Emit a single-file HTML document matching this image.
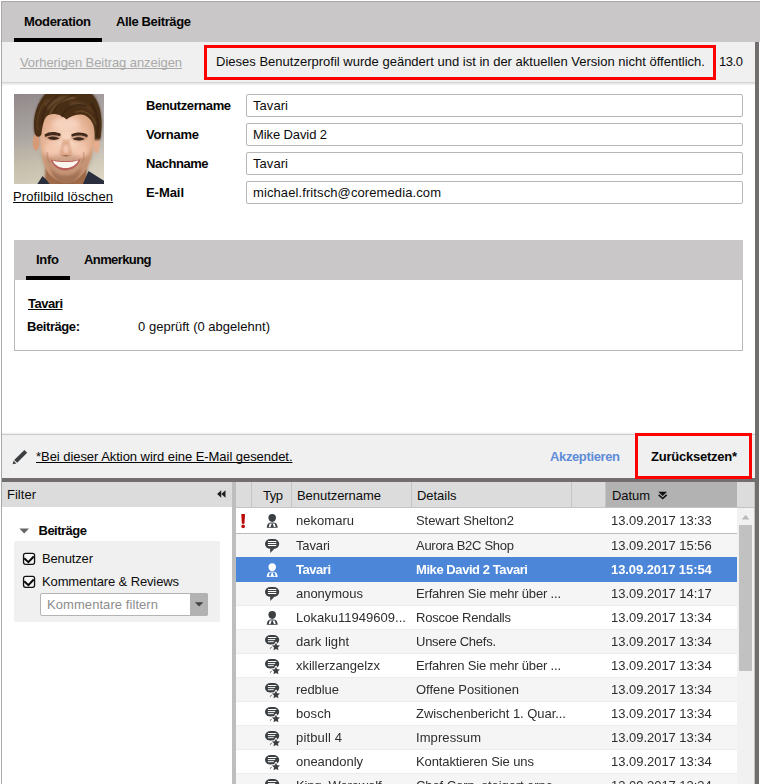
<!DOCTYPE html>
<html lang="de"><head><meta charset="utf-8"><title>Moderation</title>
<style>
html,body{margin:0;padding:0;}
body{width:760px;height:784px;position:relative;overflow:hidden;background:#fff;font-family:"Liberation Sans", sans-serif;}
#r{position:absolute;left:0;top:0;width:760px;height:784px;overflow:hidden;}
#r div,#r span,#r svg{position:absolute;}
#r span{white-space:pre;line-height:16px;height:16px;}
.u{text-decoration:underline;text-underline-offset:1px;text-decoration-thickness:1px;text-decoration-skip-ink:none;}
</style></head><body><div id="r">
<div style="left:1px;top:1px;width:759px;height:783px;background:#a8a8a8;"></div>
<div style="left:2px;top:2px;width:756px;height:782px;background:#fff;"></div>
<div style="left:2px;top:2px;width:758px;height:40px;background:#c9c7c7;"></div>
<div style="left:14px;top:38px;width:88px;height:4px;background:#000;"></div>
<div style="left:2px;top:42px;width:753px;height:40px;background:#f0f0f0;"></div>
<div style="left:2px;top:82px;width:753px;height:1px;background:#d4d4d4;"></div>
<div style="left:2px;top:83px;width:753px;height:1px;background:#e6e6e6;"></div>
<div style="left:2px;top:84px;width:753px;height:1px;background:#f3f3f3;"></div>
<div style="left:2px;top:85px;width:753px;height:1px;background:#fafafa;"></div>
<div style="left:755px;top:42px;width:4px;height:742px;background:#736e6e;"></div>
<div style="left:759px;top:42px;width:1px;height:742px;background:#fff;"></div>
<div style="left:204px;top:45px;width:512px;height:35px;border:3px solid #fd0000;box-sizing:border-box;"></div>
<div style="left:246px;top:94px;width:497px;height:23px;background:#fff;border:1px solid #b6b6b6;border-radius:2px;box-sizing:border-box;"></div>
<div style="left:246px;top:123px;width:497px;height:23px;background:#fff;border:1px solid #b6b6b6;border-radius:2px;box-sizing:border-box;"></div>
<div style="left:246px;top:152px;width:497px;height:23px;background:#fff;border:1px solid #b6b6b6;border-radius:2px;box-sizing:border-box;"></div>
<div style="left:246px;top:181px;width:497px;height:23px;background:#fff;border:1px solid #b6b6b6;border-radius:2px;box-sizing:border-box;"></div>
<div style="left:14px;top:240px;width:729px;height:40px;background:#c9c7c7;"></div>
<div style="left:14px;top:280px;width:729px;height:71px;background:#fff;border:1px solid #b9b9b9;border-top:none;box-sizing:border-box;"></div>
<div style="left:26px;top:276px;width:44px;height:4px;background:#000;"></div>
<div style="left:2px;top:432px;width:753px;height:1px;background:#fafafa;"></div>
<div style="left:2px;top:433px;width:753px;height:1px;background:#f1f1f1;"></div>
<div style="left:2px;top:434px;width:753px;height:1px;background:#c9c9c9;"></div>
<div style="left:2px;top:435px;width:753px;height:43px;background:#f0f0f0;"></div>
<div style="left:2px;top:478px;width:756px;height:4px;background:#736e6e;"></div>
<div style="left:635px;top:433px;width:117px;height:46px;border:3px solid #fd0000;box-sizing:border-box;"></div>
<div style="left:2px;top:482px;width:230px;height:25px;background:#dcdcdc;"></div>
<div style="left:2px;top:507px;width:230px;height:277px;background:#fff;"></div>
<div style="left:14px;top:541px;width:206px;height:81px;background:#f0f0f0;border-radius:2px;"></div>
<div style="left:40px;top:593px;width:168px;height:23px;background:#fff;border:1px solid #b4b4b4;border-radius:2px;box-sizing:border-box;"></div>
<div style="left:190px;top:593px;width:18px;height:23px;background:#b2b2b2;border-radius:0 2px 2px 0;"></div>
<div style="left:232px;top:482px;width:4px;height:302px;background:#bebebe;"></div>
<div style="left:236px;top:482px;width:502px;height:25px;background:#dcdcdc;"></div>
<div style="left:606px;top:482px;width:131px;height:25px;background:#b2b2b2;"></div>
<div style="left:251px;top:482px;width:1px;height:25px;background:#c4c4c4;"></div>
<div style="left:291px;top:482px;width:1px;height:25px;background:#c4c4c4;"></div>
<div style="left:411px;top:482px;width:1px;height:25px;background:#c4c4c4;"></div>
<div style="left:571px;top:482px;width:1px;height:25px;background:#c4c4c4;"></div>
<div style="left:605px;top:482px;width:1px;height:25px;background:#c4c4c4;"></div>
<div style="left:737px;top:482px;width:18px;height:25px;background:#dcdcdc;"></div>
<div style="left:236px;top:507px;width:519px;height:1px;background:#c4c4c4;"></div>
<div style="left:236px;top:508px;width:501px;height:26px;background:#fff;"></div>
<div style="left:236px;top:534px;width:501px;height:24px;background:#f5f5f5;"></div>
<div style="left:236px;top:582px;width:501px;height:24px;background:#f5f5f5;"></div>
<div style="left:236px;top:605px;width:501px;height:1px;background:#ececec;"></div>
<div style="left:236px;top:606px;width:501px;height:24px;background:#fff;"></div>
<div style="left:236px;top:629px;width:501px;height:1px;background:#ececec;"></div>
<div style="left:236px;top:630px;width:501px;height:24px;background:#f5f5f5;"></div>
<div style="left:236px;top:653px;width:501px;height:1px;background:#ececec;"></div>
<div style="left:236px;top:654px;width:501px;height:24px;background:#fff;"></div>
<div style="left:236px;top:677px;width:501px;height:1px;background:#ececec;"></div>
<div style="left:236px;top:678px;width:501px;height:24px;background:#f5f5f5;"></div>
<div style="left:236px;top:701px;width:501px;height:1px;background:#ececec;"></div>
<div style="left:236px;top:702px;width:501px;height:24px;background:#fff;"></div>
<div style="left:236px;top:725px;width:501px;height:1px;background:#ececec;"></div>
<div style="left:236px;top:726px;width:501px;height:24px;background:#f5f5f5;"></div>
<div style="left:236px;top:749px;width:501px;height:1px;background:#ececec;"></div>
<div style="left:236px;top:750px;width:501px;height:24px;background:#fff;"></div>
<div style="left:236px;top:773px;width:501px;height:1px;background:#ececec;"></div>
<div style="left:236px;top:774px;width:501px;height:24px;background:#f5f5f5;"></div>
<div style="left:236px;top:797px;width:501px;height:1px;background:#ececec;"></div>
<div style="left:236px;top:533px;width:501px;height:1px;background:#bcbcbc;"></div>
<div style="left:236px;top:557px;width:501px;height:25px;background:#4b86d8;"></div>
<div style="left:737px;top:508px;width:18px;height:276px;background:#f1f1f1;"></div>
<div style="left:739px;top:525px;width:13px;height:146px;background:#c1c1c1;"></div>
<div style="left:754px;top:482px;width:1px;height:302px;background:#c3c0c0;"></div>
<div style="left:755px;top:482px;width:4px;height:302px;background:#736e6e;"></div>
<svg width="90" height="90" viewBox="0 0 90 90" style="left:14px;top:94px;overflow:hidden">
<defs>
<linearGradient id="bgv" x1="0" y1="0" x2="0" y2="1">
<stop offset="0" stop-color="#9a9292"/><stop offset="0.45" stop-color="#b3adaa"/><stop offset="0.8" stop-color="#d2cab6"/><stop offset="1" stop-color="#dcd5c2"/>
</linearGradient>
<linearGradient id="bgh" x1="0" y1="0" x2="1" y2="0">
<stop offset="0" stop-color="#000" stop-opacity="0.06"/><stop offset="1" stop-color="#fff" stop-opacity="0.10"/>
</linearGradient>
<radialGradient id="skin" cx="0.48" cy="0.42" r="0.62">
<stop offset="0" stop-color="#f9dcc8"/><stop offset="0.5" stop-color="#f0c2a8"/><stop offset="0.85" stop-color="#dba684"/><stop offset="1" stop-color="#b68060"/>
</radialGradient>
<filter id="b1" x="-20%" y="-20%" width="140%" height="140%"><feGaussianBlur stdDeviation="1.1"/></filter>
<filter id="b2" x="-30%" y="-30%" width="160%" height="160%"><feGaussianBlur stdDeviation="2.2"/></filter>
<filter id="b05" x="-20%" y="-20%" width="140%" height="140%"><feGaussianBlur stdDeviation="0.6"/></filter>
<clipPath id="pc"><rect x="0" y="0" width="90" height="90"/></clipPath>
</defs>
<g clip-path="url(#pc)">
<rect width="90" height="90" fill="url(#bgv)"/>
<rect width="90" height="90" fill="url(#bgh)"/>
<!-- neck -->
<path d="M32,70 L72,70 L74,92 L30,92 Z" fill="#a06c4c" filter="url(#b1)"/>
<!-- shirt -->
<path d="M22,92 L28.5,82 L33,86.5 L37,92 Z" fill="#2a2e3c" filter="url(#b05)"/>
<path d="M68,92 L74.5,77 L84,83 L92,88 L92,92 Z" fill="#2a2e3c" filter="url(#b05)"/>
<!-- ears -->
<ellipse cx="22.2" cy="48.5" rx="3.4" ry="8.5" fill="#d79a78" filter="url(#b05)"/>
<ellipse cx="82.6" cy="51" rx="3.2" ry="8" fill="#e6ae8e" filter="url(#b05)"/>
<!-- hair back -->
<path d="M21,40 C18.5,24 23,8 33,-2 L76,-2 C86,6 90,24 86,46 L80,46 L78,30 L30,30 L26,42 Z" fill="#4a3019" filter="url(#b1)"/>
<!-- face -->
<path d="M26,36 C26,22 36,18 52,18 C68,18 80,22 80.5,38 C81,52 78,66 71,77 C65,86 58,89.5 52.5,89.5 C46,89.5 38,85 32.5,76 C27,66 26,50 26,36 Z" fill="url(#skin)" filter="url(#b05)"/>
<!-- beard shadow -->
<path d="M27,56 C29,70 34,80 41,86 C48,90.5 57,90.5 64,86 C72,80 77,68 79.5,54 C75,62 70,64 66,62 C60,60.5 44,60.5 39,62 C34,63.5 30,62 27,56 Z" fill="#8a5a3e" opacity="0.34" filter="url(#b2)"/>
<path d="M37,74 C42,84 62,84 67,73 C66,86 58,90 52,90 C46,90 38,86 37,74 Z" fill="#7a4e34" opacity="0.42" filter="url(#b1)"/>
<!-- cheeks highlight -->
<ellipse cx="36" cy="56" rx="6" ry="5" fill="#f6c9b2" opacity="0.8" filter="url(#b2)"/>
<ellipse cx="68" cy="57" rx="6" ry="5" fill="#f6c9b2" opacity="0.8" filter="url(#b2)"/>
<ellipse cx="52" cy="30" rx="13" ry="6" fill="#f7d6c2" opacity="0.85" filter="url(#b2)"/>
<!-- hair front -->
<path d="M20.5,38 C18,22 24,6 34,-2 L75,-2 C85,5 90,22 86.5,44 C85,46 83,44 82,40 C82,32 79,24 72,21 C65,19.5 58,21 52.5,25.5 C48,21 40,18.5 34,21 C29.5,24.5 28.5,32 27.5,40 C26,44 22,44 20.5,38 Z" fill="#4a2f19" filter="url(#b05)"/>
<path d="M30,10 C38,2 52,0 64,4 C54,4 42,7 34,16 Z" fill="#6e5032" opacity="0.7" filter="url(#b1)"/>
<path d="M56,8 C66,6 76,10 80,20 C74,13 66,10 56,12 Z" fill="#6a4a2c" opacity="0.7" filter="url(#b1)"/>
<ellipse cx="39" cy="43" rx="8" ry="3.2" fill="#a9714f" opacity="0.55" filter="url(#b1)"/>
<ellipse cx="65" cy="44" rx="8" ry="3.2" fill="#a9714f" opacity="0.55" filter="url(#b1)"/>
<g filter="url(#b05)" fill="none" stroke-linecap="round">
<path d="M28,30 C28,18 34,8 44,2" stroke="#3a2412" stroke-width="2.2" opacity="0.7"/>
<path d="M36,20 C40,10 50,5 60,4" stroke="#7a5836" stroke-width="1.8" opacity="0.6"/>
<path d="M48,22 C52,13 62,9 72,12" stroke="#38220f" stroke-width="2.2" opacity="0.65"/>
<path d="M62,18 C70,15 78,20 82,30" stroke="#76532f" stroke-width="1.6" opacity="0.55"/>
<path d="M83,42 C85,32 84,20 78,10" stroke="#36200e" stroke-width="2.4" opacity="0.6"/>
<path d="M24,36 C22,26 25,14 33,5" stroke="#6a4828" stroke-width="1.5" opacity="0.5"/>
<path d="M40,16 C44,9 52,3 62,0" stroke="#38220f" stroke-width="1.6" opacity="0.55"/>
</g>
<!-- eyebrows -->
<path d="M30.5,40.6 C35,37.4 41,37.4 46.8,39.8 L46.2,42.2 C41,40.6 35.5,40.8 31,43 Z" fill="#43291a" filter="url(#b05)"/>
<path d="M57.2,40.4 C63,37.8 69,38 73.8,41 L73.2,43.4 C68.5,41 63,41 57.8,42.8 Z" fill="#43291a" filter="url(#b05)"/>
<!-- eyes -->
<path d="M33.5,44 C37,41.8 42,42 45.5,44.6 C42,46.4 37,46.4 33.5,44 Z" fill="#3c261c" filter="url(#b05)"/>
<path d="M58.5,44.8 C62,42.6 67,42.6 70.5,45 C67,47 62,47 58.5,44.8 Z" fill="#3c261c" filter="url(#b05)"/>
<!-- nose -->
<path d="M49,44 C47.5,52 46,57 45.5,60 C47,62.5 50,62 51.5,61 C53.5,62.4 57,62.4 58.5,60 C57.5,57 56,52 55,44 C53,47 51,47 49,44 Z" fill="#d99c7c" opacity="0.75" filter="url(#b1)"/>
<path d="M46,60.6 C48,62 50,61.6 51.6,60.8 C53.4,61.8 56,62 58,60.4 C56,63 48,63.2 46,60.6 Z" fill="#8c563c" opacity="0.8" filter="url(#b05)"/>
<ellipse cx="52" cy="55" rx="2.6" ry="4" fill="#f8d4c0" opacity="0.8" filter="url(#b1)"/>
<path d="M33.5,58 C33,63 34,67 36.5,69" fill="none" stroke="#9a6244" stroke-width="1.6" opacity="0.32" filter="url(#b05)"/>
<path d="M69.5,58 C70.5,63 69.5,67 67,69" fill="none" stroke="#9a6244" stroke-width="1.6" opacity="0.32" filter="url(#b05)"/>
<!-- mouth -->
<path d="M36.5,65.2 C42,67.6 61,67.8 66.5,65 C64.5,72 58.5,76.4 51.5,76.4 C44.5,76.4 38.5,72 36.5,65.2 Z" fill="#b8605a" filter="url(#b05)"/>
<path d="M38.6,66.4 C44,68.6 59,68.8 64.4,66.2 C62.4,71 57.5,74 51.5,74 C45.5,74 40.6,71 38.6,66.4 Z" fill="#fbf6ee" filter="url(#b05)"/>
</g>
</svg>
<span style="left:24px;top:13.5px;font-size:13px;color:#050505;letter-spacing:-0.34px;font-weight:700;">Moderation</span>
<span style="left:116px;top:13.5px;font-size:13px;color:#050505;letter-spacing:-0.374px;font-weight:700;">Alle Beiträge</span>
<span class="u" style="left:20px;top:54.5px;font-size:13px;color:#a9a9a9;letter-spacing:-0.079px;">Vorherigen Beitrag anzeigen</span>
<span style="left:216px;top:53.5px;font-size:13px;color:#0c0c0c;letter-spacing:0.008px;">Dieses Benutzerprofil wurde geändert und ist in der aktuellen Version nicht öffentlich.</span>
<span style="left:719px;top:53.5px;font-size:13px;color:#0c0c0c;letter-spacing:-0.438px;">13.0</span>
<span style="left:146px;top:97.5px;font-size:13px;color:#050505;letter-spacing:-0.416px;font-weight:700;">Benutzername</span>
<span style="left:146px;top:126.5px;font-size:13px;color:#050505;letter-spacing:-0.279px;font-weight:700;">Vorname</span>
<span style="left:146px;top:155.5px;font-size:13px;color:#050505;letter-spacing:-0.464px;font-weight:700;">Nachname</span>
<span style="left:146px;top:184.5px;font-size:13px;color:#050505;letter-spacing:-0.059px;font-weight:700;">E-Mail</span>
<span style="left:253px;top:97.5px;font-size:13px;color:#0c0c0c;letter-spacing:0.062px;">Tavari</span>
<span style="left:253px;top:126.5px;font-size:13px;color:#0c0c0c;letter-spacing:-0.104px;">Mike David 2</span>
<span style="left:253px;top:155.5px;font-size:13px;color:#0c0c0c;letter-spacing:0.062px;">Tavari</span>
<span style="left:253px;top:184.5px;font-size:13px;color:#0c0c0c;letter-spacing:0.102px;">michael.fritsch@coremedia.com</span>
<span class="u" style="left:13px;top:188.5px;font-size:13px;color:#050505;letter-spacing:0.101px;">Profilbild löschen</span>
<span style="left:36px;top:251.5px;font-size:13px;color:#050505;letter-spacing:-0.276px;font-weight:700;">Info</span>
<span style="left:84px;top:251.5px;font-size:13px;color:#050505;letter-spacing:-0.592px;font-weight:700;">Anmerkung</span>
<span class="u" style="left:28px;top:295.5px;font-size:13px;color:#050505;letter-spacing:-0.469px;font-weight:700;">Tavari</span>
<span style="left:27px;top:318.5px;font-size:13px;color:#050505;letter-spacing:-0.42px;font-weight:700;">Beiträge:</span>
<span style="left:138px;top:318.5px;font-size:13px;color:#0c0c0c;letter-spacing:0.021px;">0 geprüft (0 abgelehnt)</span>
<span class="u" style="left:36px;top:448.5px;font-size:13px;color:#050505;letter-spacing:-0.05px;">*Bei dieser Aktion wird eine E-Mail gesendet.</span>
<span style="left:550px;top:448.5px;font-size:13px;color:#5e8cd8;letter-spacing:-0.37px;font-weight:700;">Akzeptieren</span>
<span style="left:651px;top:448.5px;font-size:13px;color:#050505;letter-spacing:-0.24px;font-weight:700;">Zurücksetzen*</span>
<span style="left:7px;top:486.5px;font-size:13px;color:#0c0c0c;letter-spacing:0.022px;">Filter</span>
<span style="left:38.5px;top:522.5px;font-size:13px;color:#050505;letter-spacing:-0.504px;font-weight:700;">Beiträge</span>
<span style="left:42px;top:550.5px;font-size:13px;color:#0c0c0c;letter-spacing:-0.15px;">Benutzer</span>
<span style="left:42px;top:573.5px;font-size:13px;color:#0c0c0c;letter-spacing:-0.129px;">Kommentare &amp; Reviews</span>
<span style="left:47px;top:596.5px;font-size:13px;color:#8d8d8d;letter-spacing:0.069px;">Kommentare filtern</span>
<span style="left:263px;top:487.5px;font-size:13px;color:#0c0c0c;letter-spacing:-0.484px;">Typ</span>
<span style="left:297px;top:487.5px;font-size:13px;color:#0c0c0c;letter-spacing:-0.051px;">Benutzername</span>
<span style="left:417px;top:487.5px;font-size:13px;color:#0c0c0c;letter-spacing:-0.042px;">Details</span>
<span style="left:612px;top:487.5px;font-size:13px;color:#0c0c0c;letter-spacing:-0.074px;">Datum</span>
<div style="left:0;top:0;width:760px;height:784px;will-change:transform;">
<span style="left:296px;top:512.5px;font-size:13px;color:#2e2e2e;letter-spacing:0.027px;">nekomaru</span>
<span style="left:416px;top:512.5px;font-size:13px;color:#2e2e2e;letter-spacing:-0.068px;">Stewart Shelton2</span>
<span style="left:611px;top:512.5px;font-size:13px;color:#2e2e2e;letter-spacing:-0.028px;">13.09.2017 13:33</span>
<span style="left:296px;top:537.5px;font-size:13px;color:#2e2e2e;letter-spacing:-0.138px;">Tavari</span>
<span style="left:416px;top:537.5px;font-size:13px;color:#2e2e2e;letter-spacing:-0.279px;">Aurora B2C Shop</span>
<span style="left:611px;top:537.5px;font-size:13px;color:#2e2e2e;letter-spacing:-0.028px;">13.09.2017 15:56</span>
<span style="left:296px;top:561.5px;font-size:13px;color:#fff;letter-spacing:-0.469px;font-weight:700;">Tavari</span>
<span style="left:416px;top:561.5px;font-size:13px;color:#fff;letter-spacing:-0.429px;font-weight:700;">Mike David 2 Tavari</span>
<span style="left:611px;top:561.5px;font-size:13px;color:#fff;letter-spacing:-0.076px;font-weight:700;">13.09.2017 15:54</span>
<span style="left:296px;top:585.5px;font-size:13px;color:#2e2e2e;letter-spacing:-0.027px;">anonymous</span>
<span style="left:416px;top:585.5px;font-size:13px;color:#2e2e2e;letter-spacing:-0.183px;">Erfahren Sie mehr über ...</span>
<span style="left:611px;top:585.5px;font-size:13px;color:#2e2e2e;letter-spacing:-0.028px;">13.09.2017 14:17</span>
<span style="left:296px;top:609.5px;font-size:13px;color:#2e2e2e;letter-spacing:0.022px;">Lokaku11949609...</span>
<span style="left:416px;top:609.5px;font-size:13px;color:#2e2e2e;letter-spacing:-0.234px;">Roscoe Rendalls</span>
<span style="left:611px;top:609.5px;font-size:13px;color:#2e2e2e;letter-spacing:-0.028px;">13.09.2017 13:34</span>
<span style="left:296px;top:633.5px;font-size:13px;color:#2e2e2e;letter-spacing:0.028px;">dark light</span>
<span style="left:416px;top:633.5px;font-size:13px;color:#2e2e2e;letter-spacing:-0.258px;">Unsere Chefs.</span>
<span style="left:611px;top:633.5px;font-size:13px;color:#2e2e2e;letter-spacing:-0.028px;">13.09.2017 13:34</span>
<span style="left:296px;top:657.5px;font-size:13px;color:#2e2e2e;letter-spacing:-0.039px;">xkillerzangelzx</span>
<span style="left:416px;top:657.5px;font-size:13px;color:#2e2e2e;letter-spacing:-0.183px;">Erfahren Sie mehr über ...</span>
<span style="left:611px;top:657.5px;font-size:13px;color:#2e2e2e;letter-spacing:-0.028px;">13.09.2017 13:34</span>
<span style="left:296px;top:681.5px;font-size:13px;color:#2e2e2e;letter-spacing:-0.062px;">redblue</span>
<span style="left:416px;top:681.5px;font-size:13px;color:#2e2e2e;letter-spacing:-0.008px;">Offene Positionen</span>
<span style="left:611px;top:681.5px;font-size:13px;color:#2e2e2e;letter-spacing:-0.028px;">13.09.2017 13:34</span>
<span style="left:296px;top:705.5px;font-size:13px;color:#2e2e2e;letter-spacing:0.074px;">bosch</span>
<span style="left:416px;top:705.5px;font-size:13px;color:#2e2e2e;letter-spacing:-0.041px;">Zwischenbericht 1. Quar...</span>
<span style="left:611px;top:705.5px;font-size:13px;color:#2e2e2e;letter-spacing:-0.028px;">13.09.2017 13:34</span>
<span style="left:296px;top:729.5px;font-size:13px;color:#2e2e2e;letter-spacing:0.148px;">pitbull 4</span>
<span style="left:416px;top:729.5px;font-size:13px;color:#2e2e2e;letter-spacing:0.088px;">Impressum</span>
<span style="left:611px;top:729.5px;font-size:13px;color:#2e2e2e;letter-spacing:-0.028px;">13.09.2017 13:34</span>
<span style="left:296px;top:753.5px;font-size:13px;color:#2e2e2e;letter-spacing:-0.026px;">oneandonly</span>
<span style="left:416px;top:753.5px;font-size:13px;color:#2e2e2e;letter-spacing:-0.104px;">Kontaktieren Sie uns</span>
<span style="left:611px;top:753.5px;font-size:13px;color:#2e2e2e;letter-spacing:-0.028px;">13.09.2017 13:34</span>
<span style="left:296px;top:777.5px;font-size:13px;color:#2e2e2e;letter-spacing:-0.142px;">King_Werewolf</span>
<span style="left:416px;top:777.5px;font-size:13px;color:#2e2e2e;letter-spacing:-0.08px;">Chef Corp. steigert erne...</span>
<span style="left:611px;top:777.5px;font-size:13px;color:#2e2e2e;letter-spacing:-0.028px;">13.09.2017 13:34</span>
</div>
<svg width="760" height="784" viewBox="0 0 760 784" style="left:0;top:0;pointer-events:none"><path d="M272.2,514.0 C274.8,514.0 276.0,515.8 276.0,517.6 C276.0,520.1 274.4,522.0 272.2,522.0 C270.0,522.0 268.4,520.1 268.4,517.6 C268.4,515.8 269.59999999999997,514.0 272.2,514.0 Z" fill="#3b3f42"/><path d="M266.7,527.8 C266.9,524.5 268.2,523.0 270.2,522.5 L274.2,522.5 C276.2,523.0 277.5,524.5 277.7,527.8 Z" fill="#3b3f42"/><path d="M268.7,527.0999999999999 L269.7,523.4 L274.7,523.4 L275.7,527.0999999999999 Z" fill="#fff"/><path d="M271.9,523.1999999999999 L272.5,523.1999999999999 L274.0,527.3 L270.4,527.3 Z" fill="#3b3f42"/><rect x="265.0" y="539.0" width="14.2" height="9.8" rx="5.4" ry="4.7" fill="#3b3f42"/><path d="M270.20000000000005,548.3000000000001 L270.25,552.9 L274.8,548.3000000000001 Z" fill="#3b3f42"/><rect x="267.90000000000003" y="541.0" width="8.4" height="1.05" fill="#fff"/><rect x="267.90000000000003" y="543.0" width="8.4" height="1.05" fill="#fff"/><rect x="267.90000000000003" y="545.0" width="8.4" height="1.05" fill="#fff"/><path d="M272.2,563.2 C274.8,563.2 276.0,565.0 276.0,566.8000000000001 C276.0,569.3000000000001 274.4,571.2 272.2,571.2 C270.0,571.2 268.4,569.3000000000001 268.4,566.8000000000001 C268.4,565.0 269.59999999999997,563.2 272.2,563.2 Z" fill="#fff"/><path d="M266.7,577.0 C266.9,573.7 268.2,572.2 270.2,571.7 L274.2,571.7 C276.2,572.2 277.5,573.7 277.7,577.0 Z" fill="#fff"/><path d="M268.7,576.3 L269.7,572.6 L274.7,572.6 L275.7,576.3 Z" fill="#4b86d8"/><path d="M271.9,572.4 L272.5,572.4 L274.0,576.5 L270.4,576.5 Z" fill="#fff"/><rect x="265.0" y="587.0" width="14.2" height="9.8" rx="5.4" ry="4.7" fill="#3b3f42"/><path d="M270.20000000000005,596.3000000000001 L270.25,600.9 L274.8,596.3000000000001 Z" fill="#3b3f42"/><rect x="267.90000000000003" y="589.0" width="8.4" height="1.05" fill="#fff"/><rect x="267.90000000000003" y="591.0" width="8.4" height="1.05" fill="#fff"/><rect x="267.90000000000003" y="593.0" width="8.4" height="1.05" fill="#fff"/><path d="M272.2,611.0 C274.8,611.0 276.0,612.8 276.0,614.6 C276.0,617.1 274.4,619.0 272.2,619.0 C270.0,619.0 268.4,617.1 268.4,614.6 C268.4,612.8 269.59999999999997,611.0 272.2,611.0 Z" fill="#3b3f42"/><path d="M266.7,624.8 C266.9,621.5 268.2,620.0 270.2,619.5 L274.2,619.5 C276.2,620.0 277.5,621.5 277.7,624.8 Z" fill="#3b3f42"/><path d="M268.7,624.0999999999999 L269.7,620.4 L274.7,620.4 L275.7,624.0999999999999 Z" fill="#fff"/><path d="M271.9,620.1999999999999 L272.5,620.1999999999999 L274.0,624.3 L270.4,624.3 Z" fill="#3b3f42"/><rect x="265.0" y="635.0" width="14.2" height="9.6" rx="5.6" ry="4.7" fill="#3b3f42"/><rect x="267.90000000000003" y="637.0" width="8.4" height="1.0" fill="#f5f5f5"/><rect x="267.90000000000003" y="639.1" width="7.3" height="1.0" fill="#f5f5f5"/><rect x="267.90000000000003" y="641.2" width="5.9" height="1.0" fill="#f5f5f5"/><path d="M269.90000000000003,648.7 L271.8,646.9000000000001" stroke="#3b3f42" stroke-width="0.9" fill="none"/><polygon points="275.95,642.70 277.15,645.24 279.94,645.60 277.90,647.53 278.42,650.30 275.95,648.95 273.48,650.30 274.00,647.53 271.96,645.60 274.75,645.24" fill="#f5f5f5" stroke="#f5f5f5" stroke-width="1.9" stroke-linejoin="round"/><polygon points="275.95,642.70 277.15,645.24 279.94,645.60 277.90,647.53 278.42,650.30 275.95,648.95 273.48,650.30 274.00,647.53 271.96,645.60 274.75,645.24" fill="#3b3f42"/><rect x="265.0" y="659.0" width="14.2" height="9.6" rx="5.6" ry="4.7" fill="#3b3f42"/><rect x="267.90000000000003" y="661.0" width="8.4" height="1.0" fill="#fff"/><rect x="267.90000000000003" y="663.1" width="7.3" height="1.0" fill="#fff"/><rect x="267.90000000000003" y="665.2" width="5.9" height="1.0" fill="#fff"/><path d="M269.90000000000003,672.7 L271.8,670.9000000000001" stroke="#3b3f42" stroke-width="0.9" fill="none"/><polygon points="275.95,666.70 277.15,669.24 279.94,669.60 277.90,671.53 278.42,674.30 275.95,672.95 273.48,674.30 274.00,671.53 271.96,669.60 274.75,669.24" fill="#fff" stroke="#fff" stroke-width="1.9" stroke-linejoin="round"/><polygon points="275.95,666.70 277.15,669.24 279.94,669.60 277.90,671.53 278.42,674.30 275.95,672.95 273.48,674.30 274.00,671.53 271.96,669.60 274.75,669.24" fill="#3b3f42"/><rect x="265.0" y="683.0" width="14.2" height="9.6" rx="5.6" ry="4.7" fill="#3b3f42"/><rect x="267.90000000000003" y="685.0" width="8.4" height="1.0" fill="#f5f5f5"/><rect x="267.90000000000003" y="687.1" width="7.3" height="1.0" fill="#f5f5f5"/><rect x="267.90000000000003" y="689.2" width="5.9" height="1.0" fill="#f5f5f5"/><path d="M269.90000000000003,696.7 L271.8,694.9000000000001" stroke="#3b3f42" stroke-width="0.9" fill="none"/><polygon points="275.95,690.70 277.15,693.24 279.94,693.60 277.90,695.53 278.42,698.30 275.95,696.95 273.48,698.30 274.00,695.53 271.96,693.60 274.75,693.24" fill="#f5f5f5" stroke="#f5f5f5" stroke-width="1.9" stroke-linejoin="round"/><polygon points="275.95,690.70 277.15,693.24 279.94,693.60 277.90,695.53 278.42,698.30 275.95,696.95 273.48,698.30 274.00,695.53 271.96,693.60 274.75,693.24" fill="#3b3f42"/><rect x="265.0" y="707.0" width="14.2" height="9.6" rx="5.6" ry="4.7" fill="#3b3f42"/><rect x="267.90000000000003" y="709.0" width="8.4" height="1.0" fill="#fff"/><rect x="267.90000000000003" y="711.1" width="7.3" height="1.0" fill="#fff"/><rect x="267.90000000000003" y="713.2" width="5.9" height="1.0" fill="#fff"/><path d="M269.90000000000003,720.7 L271.8,718.9000000000001" stroke="#3b3f42" stroke-width="0.9" fill="none"/><polygon points="275.95,714.70 277.15,717.24 279.94,717.60 277.90,719.53 278.42,722.30 275.95,720.95 273.48,722.30 274.00,719.53 271.96,717.60 274.75,717.24" fill="#fff" stroke="#fff" stroke-width="1.9" stroke-linejoin="round"/><polygon points="275.95,714.70 277.15,717.24 279.94,717.60 277.90,719.53 278.42,722.30 275.95,720.95 273.48,722.30 274.00,719.53 271.96,717.60 274.75,717.24" fill="#3b3f42"/><rect x="265.0" y="731.0" width="14.2" height="9.6" rx="5.6" ry="4.7" fill="#3b3f42"/><rect x="267.90000000000003" y="733.0" width="8.4" height="1.0" fill="#f5f5f5"/><rect x="267.90000000000003" y="735.1" width="7.3" height="1.0" fill="#f5f5f5"/><rect x="267.90000000000003" y="737.2" width="5.9" height="1.0" fill="#f5f5f5"/><path d="M269.90000000000003,744.7 L271.8,742.9000000000001" stroke="#3b3f42" stroke-width="0.9" fill="none"/><polygon points="275.95,738.70 277.15,741.24 279.94,741.60 277.90,743.53 278.42,746.30 275.95,744.95 273.48,746.30 274.00,743.53 271.96,741.60 274.75,741.24" fill="#f5f5f5" stroke="#f5f5f5" stroke-width="1.9" stroke-linejoin="round"/><polygon points="275.95,738.70 277.15,741.24 279.94,741.60 277.90,743.53 278.42,746.30 275.95,744.95 273.48,746.30 274.00,743.53 271.96,741.60 274.75,741.24" fill="#3b3f42"/><rect x="265.0" y="755.0" width="14.2" height="9.6" rx="5.6" ry="4.7" fill="#3b3f42"/><rect x="267.90000000000003" y="757.0" width="8.4" height="1.0" fill="#fff"/><rect x="267.90000000000003" y="759.1" width="7.3" height="1.0" fill="#fff"/><rect x="267.90000000000003" y="761.2" width="5.9" height="1.0" fill="#fff"/><path d="M269.90000000000003,768.7 L271.8,766.9000000000001" stroke="#3b3f42" stroke-width="0.9" fill="none"/><polygon points="275.95,762.70 277.15,765.24 279.94,765.60 277.90,767.53 278.42,770.30 275.95,768.95 273.48,770.30 274.00,767.53 271.96,765.60 274.75,765.24" fill="#fff" stroke="#fff" stroke-width="1.9" stroke-linejoin="round"/><polygon points="275.95,762.70 277.15,765.24 279.94,765.60 277.90,767.53 278.42,770.30 275.95,768.95 273.48,770.30 274.00,767.53 271.96,765.60 274.75,765.24" fill="#3b3f42"/><rect x="265.0" y="779.0" width="14.2" height="9.6" rx="5.6" ry="4.7" fill="#3b3f42"/><rect x="267.90000000000003" y="781.0" width="8.4" height="1.0" fill="#f5f5f5"/><rect x="267.90000000000003" y="783.1" width="7.3" height="1.0" fill="#f5f5f5"/><rect x="267.90000000000003" y="785.2" width="5.9" height="1.0" fill="#f5f5f5"/><path d="M269.90000000000003,792.7 L271.8,790.9000000000001" stroke="#3b3f42" stroke-width="0.9" fill="none"/><polygon points="275.95,786.70 277.15,789.24 279.94,789.60 277.90,791.53 278.42,794.30 275.95,792.95 273.48,794.30 274.00,791.53 271.96,789.60 274.75,789.24" fill="#f5f5f5" stroke="#f5f5f5" stroke-width="1.9" stroke-linejoin="round"/><polygon points="275.95,786.70 277.15,789.24 279.94,789.60 277.90,791.53 278.42,794.30 275.95,792.95 273.48,794.30 274.00,791.53 271.96,789.60 274.75,789.24" fill="#3b3f42"/><path d="M241.3,514.4 Q241.3,513.9 241.9,513.9 L244.4,513.9 Q245.0,513.9 245.0,514.4 L244.45,523.8 L241.85,523.8 Z" fill="#bb0a0a"/><circle cx="243.15" cy="526.4" r="1.8" fill="#bb0a0a"/><path d="M24.4,449.9 L27.2,452.8 L17.2,462.8 L14.2,459.9 Z" fill="#3b3f42"/><path d="M13.6,460.7 L16.4,463.5 L12.6,464.2 Z" fill="#3b3f42"/><path d="M217.1,494 L221.2,490.3 L221.2,497.7 Z M221.3,494 L225.5,490.3 L225.5,497.7 Z" fill="#1e1e1e"/><path d="M19.4,528.4 L29,528.4 L24.2,533.4 Z" fill="#666"/><rect x="23.55" y="553.35" width="11.0" height="11.0" rx="2" ry="2" fill="#f7f7f7" stroke="#111" stroke-width="1.3"/><path d="M24.2,558.3 L28.4,562.2 L33.7,556.5" fill="none" stroke="#0a0a0a" stroke-width="2.0"/><rect x="23.55" y="576.35" width="11.0" height="11.0" rx="2" ry="2" fill="#f7f7f7" stroke="#111" stroke-width="1.3"/><path d="M24.2,581.3 L28.4,585.2 L33.7,579.5" fill="none" stroke="#0a0a0a" stroke-width="2.0"/><path d="M194.8,602.2 L203.4,602.2 L199.1,606.4 Z" fill="#444"/><path d="M658.3,491.7 L667.1,491.7 L662.7,496 Z" fill="#111"/><path d="M658.7,494.8 L662.7,498.5 L666.7,494.8" fill="none" stroke="#111" stroke-width="1.6"/><path d="M741.8,519.4 L749.4,519.4 L745.6,514.8 Z" fill="#b9b9b9"/></svg>
</div></body></html>
